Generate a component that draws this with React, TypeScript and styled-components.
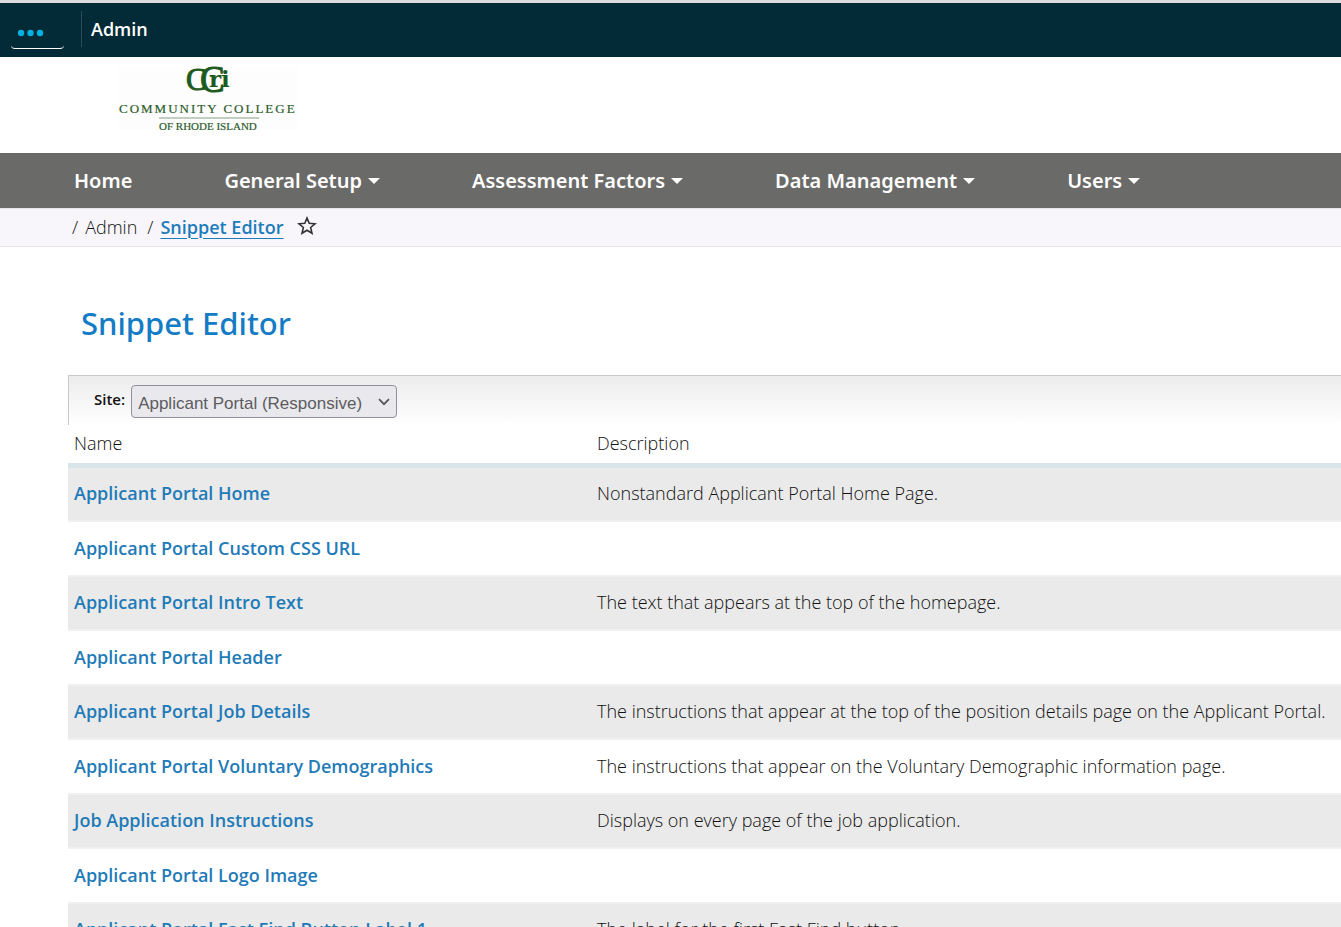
import React from "react";
import styled, { createGlobalStyle } from "styled-components";

const GlobalStyle = createGlobalStyle`
  * { box-sizing: border-box; }
  body {
    margin: 0;
    background: #fff;
    color: #111;
    font-family: "Open Sans", sans-serif;
    font-size: 18px;
    font-weight: 300;
    line-height: 24px;
    overflow-x: hidden;
  }
`;

const TopBar = styled.header`
  display: flex;
  align-items: flex-start;
  height: 57px;
  padding: 8px 11px 0;
  border-top: 3px solid #dcdce0;
  background: #032b37;
`;

const MenuButton = styled.button`
  display: flex;
  align-items: center;
  width: 53px;
  height: 38px;
  padding: 6px 0 0 7px;
  border: 0;
  border-bottom: 1px solid #fff;
  border-radius: 4px;
  background: transparent;
`;

const TopTitle = styled.div`
  height: 36px;
  margin-left: 17px;
  padding: 6px 0 0 9px;
  border-left: 1px solid #2c4d57;
  color: #fff;
  font-weight: 600;
`;

const Brand = styled.div`
  height: 96px;
  padding: 10px 118px;
`;

const Logo = styled.svg`
  display: block;
  overflow: visible;
  font-family: "Liberation Serif", serif;
  font-weight: 400;
  fill: #2c5c2c;
`;

const MainNav = styled.nav`
  display: flex;
  align-items: center;
  gap: 92px;
  height: 55px;
  padding: 0 74px;
  background: #6a6a68;
`;

const NavLink = styled.a`
  display: flex;
  align-items: center;
  gap: 6px;
  color: #fff;
  font-family: "Noto Sans", sans-serif;
  font-size: 20px;
  font-weight: 600;
  line-height: 28px;
  white-space: nowrap;
  text-decoration: none;
`;

const Caret = styled.span`
  border: 6px solid transparent;
  border-top-color: #fff;
  border-bottom: 0;
`;

const Breadcrumb = styled.nav`
  display: flex;
  align-items: center;
  height: 39px;
  padding: 0 72px 2px;
  border: solid #e5e5e5;
  border-width: 1px 0;
  background: #f8f6fa;
`;

const Crumb = styled.a`
  margin: 0 10px 0 7px;
  color: #111;
  text-decoration: none;
`;

const CurrentCrumb = styled(Crumb)`
  margin-right: 14px;
  color: #1c7cbc;
  font-weight: 600;
  text-decoration: underline;
  text-decoration-thickness: 1px;
  text-underline-offset: 4px;
`;

const StarButton = styled.button`
  display: flex;
  padding: 0 0 2px;
  border: 0;
  background: transparent;
`;

const Content = styled.main`
  padding: 53px 0 0 68px;
`;

const PageTitle = styled.h1`
  margin: 0 0 29px;
  padding-left: 13px;
  color: #147bc5;
  font-family: "Noto Sans", sans-serif;
  font-size: 31px;
  font-weight: 500;
  line-height: 46px;
`;

const FilterBar = styled.div`
  display: flex;
  align-items: flex-start;
  gap: 6px;
  height: 50px;
  padding: 9px 0 0 25px;
  border-top: 1px solid #c8cac8;
  border-left: 1px solid #c8cac8;
  background: linear-gradient(#ececec, #fff);
`;

const FilterLabel = styled.label`
  padding-top: 2px;
  font-size: 15px;
  font-weight: 600;
`;

const SelectBox = styled.div`
  display: grid;
  align-items: center;
  > * { grid-area: 1 / 1; }
  > svg {
    justify-self: end;
    margin-right: 7px;
    pointer-events: none;
  }
`;

const SiteSelect = styled.select`
  appearance: none;
  width: 266px;
  height: 33px;
  padding: 4px 24px 0 6px;
  border: 1px solid #8f8f9d;
  border-radius: 4px;
  background: #e9e9ed;
  color: #5c5c60;
  font-family: "Liberation Sans", Arial, sans-serif;
  font-size: 17px;
`;

const Table = styled.table`
  width: 100%;
  border-collapse: separate;
  border-spacing: 0;
  table-layout: fixed;
`;

const HeadCell = styled.th<{ $width?: number }>`
  width: ${(p) => (p.$width ? `${p.$width}px` : "auto")};
  height: 43px;
  padding: 0 6px 2px;
  border-bottom: 5px solid #d8e5ea;
  font-weight: inherit;
  text-align: left;
`;

const Cell = styled.td`
  padding: 0 6px 1px;
  border-bottom: 2px solid #f0f0f0;
  white-space: nowrap;
`;

const Row = styled.tr`
  height: 55px;
  &:nth-child(odd) {
    height: 54px;
    background: #eaeaea;
    ${Cell} { padding-bottom: 2px; }
  }
`;

const SnippetLink = styled.a`
  color: #1f7bb8;
  font-weight: 600;
  text-decoration: none;
`;

const navItems = [
  { label: "Home", menu: false },
  { label: "General Setup", menu: true },
  { label: "Assessment Factors", menu: true },
  { label: "Data Management", menu: true },
  { label: "Users", menu: true },
];

const snippets = [
  ["Applicant Portal Home", "Nonstandard Applicant Portal Home Page."],
  ["Applicant Portal Custom CSS URL", ""],
  ["Applicant Portal Intro Text", "The text that appears at the top of the homepage."],
  ["Applicant Portal Header", ""],
  ["Applicant Portal Job Details", "The instructions that appear at the top of the position details page on the Applicant Portal."],
  ["Applicant Portal Voluntary Demographics", "The instructions that appear on the Voluntary Demographic information page."],
  ["Job Application Instructions", "Displays on every page of the job application."],
  ["Applicant Portal Logo Image", ""],
  ["Applicant Portal Fast Find Button Label 1", "The label for the first Fast Find button."],
];

export default function App() {
  return (
    <>
      <GlobalStyle />
      <TopBar>
        <MenuButton aria-label="Open menu">
          <svg width="26" height="8" fill="#00b1e1">
            <circle cx="3" cy="4" r="3.2" />
            <circle cx="12.5" cy="4" r="3.2" />
            <circle cx="22" cy="4" r="3.2" />
          </svg>
        </MenuButton>
        <TopTitle>Admin</TopTitle>
      </TopBar>
      <Brand>
        <Logo width="181" height="64" role="img" aria-label="Community College of Rhode Island">
          <rect width="180" height="63" fill="#fdfdfd" />
          <g fill="#1d5a1d" stroke="#1d5a1d" strokeWidth="1">
            <text x="68" y="23" fontSize="31">C</text>
            <text x="82" y="25" fontSize="37">C</text>
            <text x="91" y="20" fontSize="23" fontWeight="700" fontFamily="DejaVu Serif" stroke="none">ri</text>
          </g>
          <text x="1" y="46" fontSize="13" letterSpacing="2" stroke="#2c5c2c" strokeWidth="0.2">COMMUNITY COLLEGE</text>
          <rect x="41" y="50" width="100" height="2" fill="#c3cec3" />
          <text x="41" y="63" fontSize="11" stroke="#2c5c2c" strokeWidth="0.2">OF RHODE ISLAND</text>
        </Logo>
      </Brand>
      <MainNav aria-label="Main">
        {navItems.map((item) => (
          <NavLink key={item.label} href="#">
            {item.label}
            {item.menu && <Caret />}
          </NavLink>
        ))}
      </MainNav>
      <Breadcrumb aria-label="Breadcrumb">
        <span>/</span>
        <Crumb href="#">Admin</Crumb>
        <span>/</span>
        <CurrentCrumb href="#">Snippet Editor</CurrentCrumb>
        <StarButton aria-label="Add to favorites">
          <svg width="20" height="20" viewBox="0 0 20 20" fill="none" stroke="#333" strokeWidth="1.6">
            <path d="M10 2 12.2 7.3 18 7.8 13.6 11.5 15 17.3 10 14.2 5 17.3 6.4 11.5 2 7.8 7.8 7.3Z" />
          </svg>
        </StarButton>
      </Breadcrumb>
      <Content>
        <PageTitle>Snippet Editor</PageTitle>
        <FilterBar>
          <FilterLabel htmlFor="site">Site:</FilterLabel>
          <SelectBox>
            <SiteSelect id="site" defaultValue="responsive">
              <option value="responsive">Applicant Portal (Responsive)</option>
            </SiteSelect>
            <svg width="12" height="8" fill="none" stroke="#555" strokeWidth="1.7">
              <path d="M1 1.2 6 6.2 11 1.2" />
            </svg>
          </SelectBox>
        </FilterBar>
        <Table>
          <thead>
            <tr>
              <HeadCell $width={523}>Name</HeadCell>
              <HeadCell>Description</HeadCell>
            </tr>
          </thead>
          <tbody>
            {snippets.map(([name, description]) => (
              <Row key={name}>
                <Cell>
                  <SnippetLink href="#">{name}</SnippetLink>
                </Cell>
                <Cell>{description}</Cell>
              </Row>
            ))}
          </tbody>
        </Table>
      </Content>
    </>
  );
}
